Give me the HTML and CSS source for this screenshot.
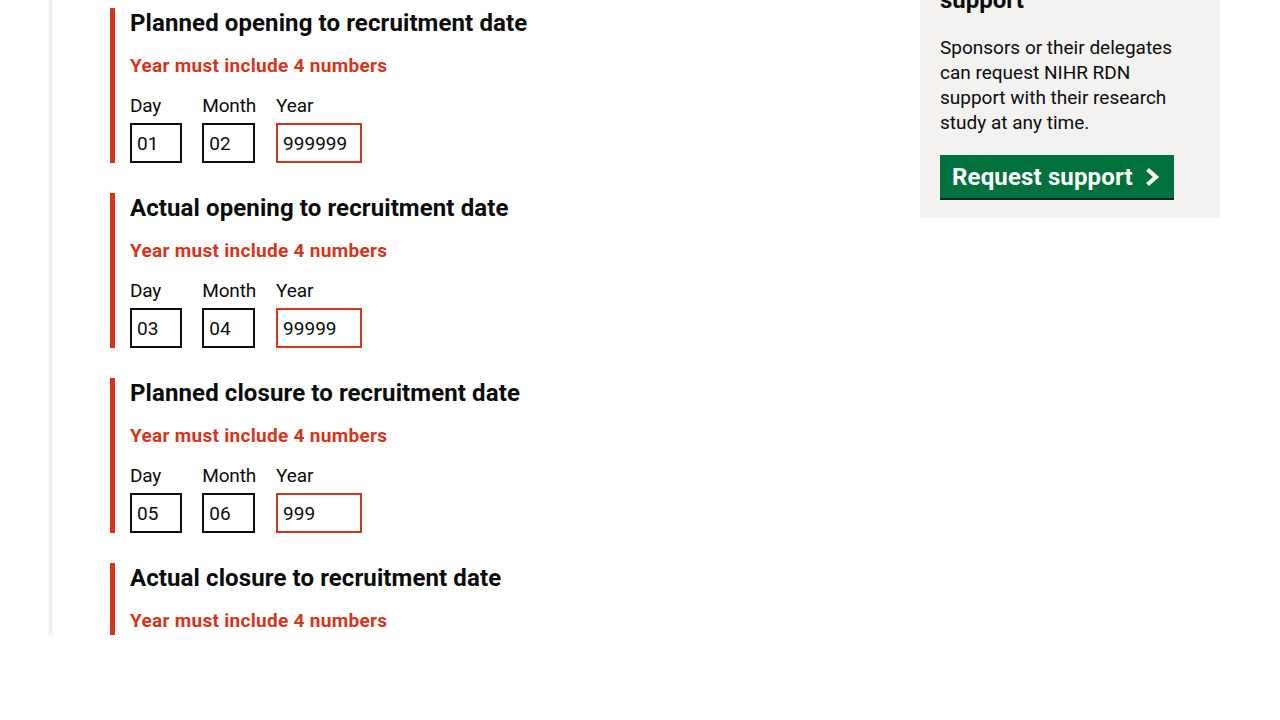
FILE: index.html
```html
<!DOCTYPE html>
<html lang="en">
<head>
<meta charset="utf-8">
<title>Study dates</title>
<link rel="stylesheet" href="styles.css">
</head>
<body>
<div class="layout">
  <main class="main">
    <div class="group">
      <h2 class="legend">Planned opening to recruitment date</h2>
      <p class="error">Year must include 4 numbers</p>
      <div class="date">
        <div class="item"><label class="label">Day</label><input class="input w2" value="01"></div>
        <div class="item"><label class="label">Month</label><input class="input w2" value="02"></div>
        <div class="item"><label class="label">Year</label><input class="input w4 bad" value="999999"></div>
      </div>
    </div>
    <div class="group">
      <h2 class="legend">Actual opening to recruitment date</h2>
      <p class="error">Year must include 4 numbers</p>
      <div class="date">
        <div class="item"><label class="label">Day</label><input class="input w2" value="03"></div>
        <div class="item"><label class="label">Month</label><input class="input w2" value="04"></div>
        <div class="item"><label class="label">Year</label><input class="input w4 bad" value="99999"></div>
      </div>
    </div>
    <div class="group">
      <h2 class="legend">Planned closure to recruitment date</h2>
      <p class="error">Year must include 4 numbers</p>
      <div class="date">
        <div class="item"><label class="label">Day</label><input class="input w2" value="05"></div>
        <div class="item"><label class="label">Month</label><input class="input w2" value="06"></div>
        <div class="item"><label class="label">Year</label><input class="input w4 bad" value="999"></div>
      </div>
    </div>
    <div class="group">
      <h2 class="legend">Actual closure to recruitment date</h2>
      <p class="error">Year must include 4 numbers</p>
      <div class="date">
        <div class="item"><label class="label">Day</label><input class="input w2" value="07"></div>
        <div class="item"><label class="label">Month</label><input class="input w2" value="08"></div>
        <div class="item"><label class="label">Year</label><input class="input w4 bad" value="99"></div>
      </div>
    </div>
  </main>
  <aside class="aside">
    <h2 class="aside-title">Get NIHR RDN<br>support</h2>
    <p class="aside-text">Sponsors or their delegates can request NIHR RDN support with their research study at any time.</p>
    <a class="button" href="#">Request support
      <svg class="chev" width="16" height="20" viewBox="0 0 16 20" aria-hidden="true"><polyline points="3.5,2.5 12,10 3.5,17.5" fill="none" stroke="#fff" stroke-width="4.2" stroke-linejoin="miter"/></svg>
    </a>
  </aside>
</div>
</body>
</html>
```
FILE: styles.css
```css
* { box-sizing: border-box; }
body {
  margin: 0;
  background: #fff;
  font-family: Roboto, "Noto Sans", Arial, sans-serif;
  color: #0b0c0c;
}
.layout {
  margin-left: 48px;
  width: 1172px;
  height: 635px;
  overflow: hidden;
  display: flex;
  align-items: flex-start;
  background: linear-gradient(to right, #fbfbfb 0, #f0f0f0 2px, #ececec 3px, #f6f6f6 4px, #fff 5px);
}
.main {
  flex: 1;
  padding: 8px 60px 0 62px;
}
.group {
  border-left: 5px solid #d4351c;
  padding-left: 15px;
  margin-bottom: 30px;
}
.legend {
  margin: 0 0 15px;
  font-size: 24px;
  line-height: 30px;
  font-weight: 700;
  letter-spacing: 0.1px;
}
.error {
  margin: 0 0 15px;
  font-size: 19px;
  line-height: 25px;
  font-weight: 700;
  color: #d4351c;
  letter-spacing: 0.3px;
}
.date {
  display: flex;
}
.item {
  display: flex;
  flex-direction: column;
  align-items: flex-start;
  margin-right: 20px;
}
.label {
  font-size: 19px;
  line-height: 25px;
  margin-bottom: 5px;
  letter-spacing: -0.15px;
}
.input {
  height: 40px;
  padding: 5px;
  border: 2px solid #0b0c0c;
  border-radius: 0;
  font-family: inherit;
  font-size: 19px;
  line-height: 25px;
  color: #0b0c0c;
  background: #fff;
}
.w2 { width: 52.25px; }
.w4 { width: 85.5px; }
.bad { border-color: #d4351c; }
.aside {
  width: 300px;
  flex: none;
  margin-top: -65px;
  background: #f3f2f1;
  padding: 20px 20px 20px;
}
.aside-title {
  margin: 0 0 20px;
  font-size: 24px;
  line-height: 30px;
  font-weight: 700;
}
.aside-text {
  margin: 0 0 20px;
  font-size: 19px;
  line-height: 25px;
}
.button {
  display: inline-flex;
  align-items: center;
  gap: 11px;
  height: 43px;
  padding: 0 14px 0 12px;
  background: #00703c;
  box-shadow: 0 2px 0 #002d18;
  color: #fff;
  text-decoration: none;
  font-size: 24px;
  font-weight: 700;
  line-height: 1;
  letter-spacing: 0.15px;
}
.chev { display: block; }
```
